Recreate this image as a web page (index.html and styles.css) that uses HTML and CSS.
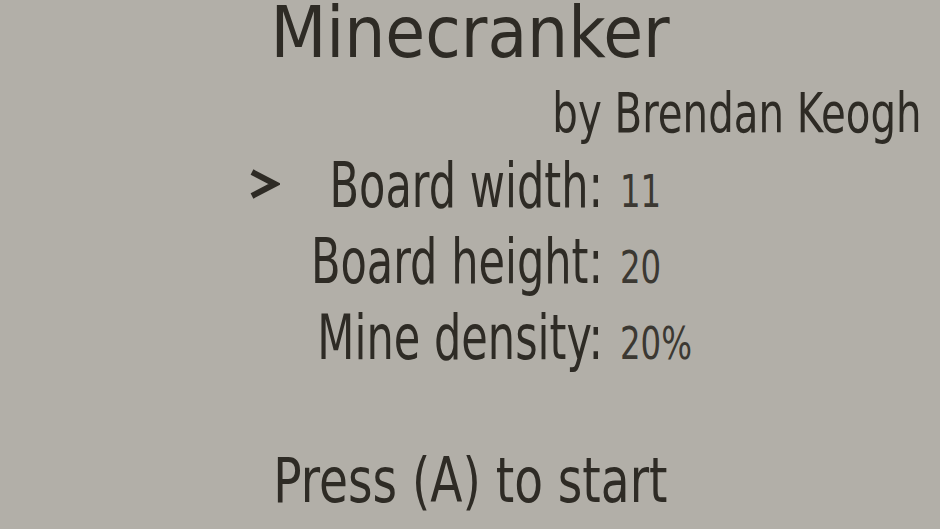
FILE: index.html
```html
<!DOCTYPE html>
<html lang="en">
<head>
    <meta charset="UTF-8">
    <meta name="viewport" content="width=device-width, initial-scale=1.0">
    <title>Minecranker</title>
    <link rel="stylesheet" href="styles.css">
</head>
<body>
    <div class="screen">
        <h1 class="title">Minecranker</h1>
        <div class="byline"><span class="narrow">by Brendan Keogh</span></div>

        <div class="menu">
            <div class="cursor">
                <svg width="32" height="32" viewBox="0 0 32 32">
                    <polyline points="4,4 27,16 4,28" fill="none" stroke="#2e2b25" stroke-width="6" stroke-linejoin="miter"/>
                </svg>
            </div>
            <div class="label"><span>Board width:</span></div>
            <div class="value">11</div>

            <div></div>
            <div class="label"><span>Board height:</span></div>
            <div class="value">20</div>

            <div></div>
            <div class="label"><span>Mine density:</span></div>
            <div class="value">20%</div>
        </div>

        <div class="start"><span class="narrow">Press (A) to start</span></div>
    </div>
</body>
</html>
```

FILE: styles.css
```css
:root {
    --screen-bg: #b2afa8;
    --ink: #2e2b25;
    --squeeze: 0.8;
}

* {
    margin: 0;
    padding: 0;
    box-sizing: border-box;
}

body {
    width: 940px;
    height: 529px;
    overflow: hidden;
    background: var(--screen-bg);
    color: var(--ink);
    font-family: 'DejaVu Sans Condensed', 'Liberation Sans Narrow', sans-serif;
}

.screen {
    display: flex;
    flex-direction: column;
}

/* the Playdate font is much narrower than anything installed */
.narrow {
    display: inline-block;
    white-space: nowrap;
    transform: scaleX(var(--squeeze));
}

.title {
    margin-top: -4px;
    font-size: 72px;
    line-height: 72px;
    font-weight: normal;
    text-align: center;
}

.byline {
    margin-top: 17px;
    padding-right: 18px;
    font-size: 56px;
    line-height: 56px;
    text-align: right;
}

.byline .narrow {
    transform-origin: right center;
}

.menu {
    margin-top: 7px;
    padding-left: 248px;
    display: grid;
    grid-template-columns: 32px 323px auto;
    grid-auto-rows: 76px;
    align-items: baseline;
}

.cursor {
    align-self: start;
    margin-top: 20px;
    display: flex;
}

/* labels grow leftwards from the colon */
.label {
    display: flex;
    justify-content: flex-end;
    font-size: 63px;
    line-height: 76px;
    white-space: nowrap;
    transform: scaleX(0.76);
    transform-origin: right center;
}

.value {
    margin-left: 17px;
    font-size: 45px;
    line-height: 76px;
    color: #3b3832;
    white-space: nowrap;
    transform: scaleX(var(--squeeze));
    transform-origin: left center;
}

.start {
    margin-top: 67px;
    font-size: 63px;
    line-height: 76px;
    text-align: center;
}

.start .narrow {
    transform: scaleX(0.83);
}
```
